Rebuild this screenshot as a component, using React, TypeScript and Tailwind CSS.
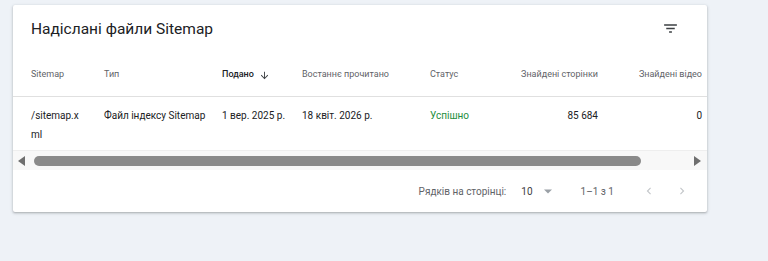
import React from "react";

const font = { fontFamily: "Roboto, 'Noto Sans', sans-serif" };

export default function App() {
  return (
    <div className="w-[768px] h-[261px] bg-[#eef2f7] overflow-hidden pt-[5px] pl-[13px]" style={font}>
      <div className="w-[694px] h-[207px] bg-white rounded-[2px] shadow-[0_1px_2px_rgba(60,64,67,0.3),0_1px_3px_1px_rgba(60,64,67,0.1)] flex flex-col overflow-hidden">
        {/* Title row */}
        <div className="h-[48px] flex items-center justify-between pl-[18px] pr-[28px]">
          <div className="text-[15.5px] text-[#202124] leading-none pt-[1px]">Надіслані файли Sitemap</div>
          <svg width="17" height="17" viewBox="0 0 24 24" className="mt-[-1px]">
            <path d="M10 18h4v-2h-4v2zM3 6v2h18V6H3zm3 7h12v-2H6v2z" fill="#3c4043" />
          </svg>
        </div>
        {/* Table */}
        <div className="overflow-hidden">
          <div className="w-[760px]">
            <div className="h-[44px] flex items-center pl-[18px] pt-[1px] text-[9px] text-[#5f6368] border-b border-[#e0e0e0]">
              <div className="w-[73px] shrink-0">Sitemap</div>
              <div className="w-[118px] shrink-0">Тип</div>
              <div className="w-[80px] shrink-0 flex items-center gap-[5px] text-[#202124] font-medium">
                <span>Подано</span>
                <svg width="11" height="11" viewBox="0 0 24 24">
                  <path d="M20 12l-1.41-1.41L13 16.17V4h-2v12.17l-5.58-5.59L4 12l8 8 8-8z" fill="#3c4043" />
                </svg>
              </div>
              <div className="w-[128px] shrink-0">Востаннє прочитано</div>
              <div className="w-[80px] shrink-0">Статус</div>
              <div className="w-[88px] shrink-0 text-right">Знайдені сторінки</div>
              <div className="w-[104px] shrink-0 text-right">Знайдені відео</div>
            </div>
            <div className="h-[54px] flex items-start pl-[18px] pt-[9px] text-[10px] leading-[19px] text-[#202124] border-b border-[#eeeeee]">
              <div className="w-[73px] shrink-0 pr-[22px] break-all">/sitemap.xml</div>
              <div className="w-[118px] shrink-0">Файл індексу Sitemap</div>
              <div className="w-[80px] shrink-0">1 вер. 2025 р.</div>
              <div className="w-[128px] shrink-0">18 квіт. 2026 р.</div>
              <div className="w-[80px] shrink-0 text-[#1e8e3e]">Успішно</div>
              <div className="w-[88px] shrink-0 text-right">85 684</div>
              <div className="w-[104px] shrink-0 text-right">0</div>
            </div>
          </div>
        </div>
        {/* Scrollbar */}
        <div className="h-[19px] bg-[#f8f8f8] flex items-center pl-[5px] pr-[6px] gap-[8px]">
          <svg width="8" height="10" viewBox="0 0 8 10">
            <path d="M7 0v10L0 5z" fill="#6f6f6f" />
          </svg>
          <div className="flex-1 flex items-center">
            <div className="w-[607px] h-[10px] rounded-full bg-[#8a8a8a]" />
          </div>
          <svg width="8" height="10" viewBox="0 0 8 10">
            <path d="M1 0v10l7-5z" fill="#6f6f6f" />
          </svg>
        </div>
        {/* Footer */}
        <div className="flex-1 flex items-center justify-end pr-[18px] text-[10px] text-[#5f6368]">
          <span>Рядків на сторінці:</span>
          <span className="ml-[15px] text-[#3c4043]">10</span>
          <svg width="8" height="5" viewBox="0 0 10 5" className="ml-[11px]">
            <path d="M0 0h10L5 5z" fill="#9aa0a6" />
          </svg>
          <span className="ml-[29px] text-[#5f6368]">1–1 з 1</span>
          <svg width="14" height="14" viewBox="0 0 24 24" className="ml-[28px]">
            <path d="M15.41 7.41L14 6l-6 6 6 6 1.41-1.41L10.83 12z" fill="#c4c7ca" />
          </svg>
          <svg width="14" height="14" viewBox="0 0 24 24" className="ml-[19px]">
            <path d="M8.59 16.59L10 18l6-6-6-6-1.41 1.41L13.17 12z" fill="#c4c7ca" />
          </svg>
        </div>
      </div>
    </div>
  );
}
